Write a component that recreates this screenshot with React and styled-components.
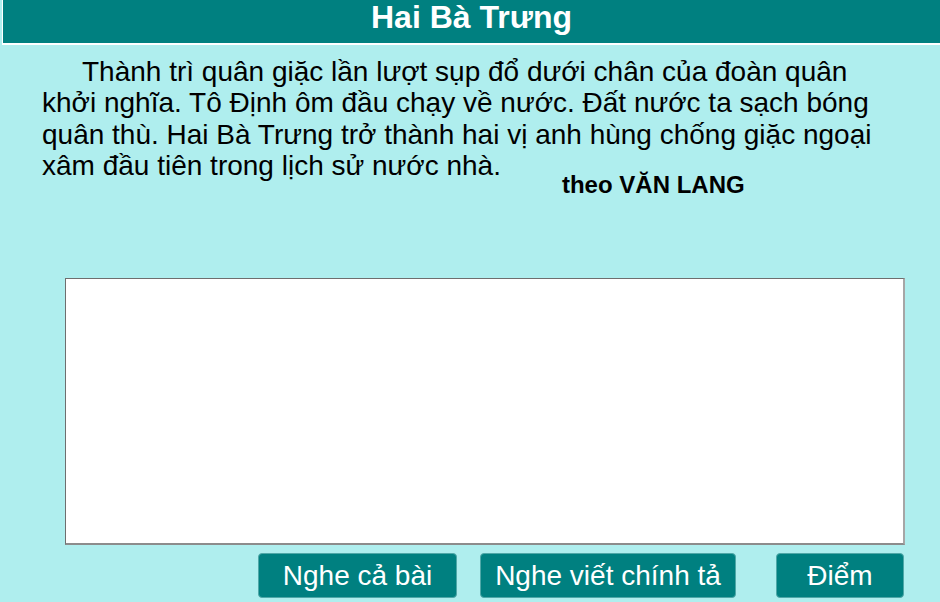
import React from "react"
import styled, { createGlobalStyle } from "styled-components"

const GlobalStyle = createGlobalStyle`
  html, body {
    margin: 0;
    padding: 0;
    background: #afeeee;
  }
  body {
    font-family: "Liberation Sans", Arial, sans-serif;
  }
`

const Page = styled.div`
  width: 940px;
  height: 602px;
  overflow: hidden;
  background: #afeeee;
  color: #000;
`

const Header = styled.h1`
  margin: 0 0 0 2px;
  height: 43px;
  line-height: 34px;
  background: #008080;
  border-left: 1px solid #fff;
  border-bottom: 2px solid #fff;
  color: #fff;
  font-size: 32px;
  font-weight: bold;
  text-align: center;
`

const Story = styled.p`
  margin: 11px 0 0;
  padding: 0 42px;
  font-size: 28px;
  line-height: 31.3px;
  text-indent: 40px;
`

const Credit = styled.span`
  margin-left: 61px;
  font-size: 24px;
  font-weight: bold;
  vertical-align: -18px;
`

const Answer = styled.textarea`
  display: block;
  box-sizing: border-box;
  width: 840px;
  height: 267px;
  margin: 78px 0 0 65px;
  padding: 4px;
  background: #fff;
  border-style: solid;
  border-width: 1px 2px 2px 1px;
  border-color: #6e6e6e #a6a6a6 #8c8c8c #6e6e6e;
  resize: none;
  font-family: "Liberation Sans", Arial, sans-serif;
  font-size: 24px;
  outline: none;
`

const Toolbar = styled.div`
  display: flex;
  justify-content: flex-end;
  margin-top: 8px;
  padding-right: 36px;
`

const Button = styled.button`
  box-sizing: border-box;
  width: ${props => props.$width}px;
  height: 45px;
  margin-left: ${props => props.$gap}px;
  padding: 0;
  background: #008080;
  border: 1px solid #4fa8a8;
  border-radius: 4px;
  color: #fff;
  font-family: "Liberation Sans", Arial, sans-serif;
  font-size: 28px;
  cursor: pointer;
`

export default function App() {
  return (
    <Page>
      <GlobalStyle />
      <Header>Hai Bà Trưng</Header>
      <Story>
        Thành trì quân giặc lần lượt sụp đổ dưới chân của đoàn quân khởi nghĩa.
        Tô Định ôm đầu chạy về nước. Đất nước ta sạch bóng quân thù. Hai Bà
        Trưng trở thành hai vị anh hùng chống giặc ngoại xâm đầu tiên trong
        lịch sử nước nhà.
        <Credit>theo VĂN LANG</Credit>
      </Story>
      <Answer />
      <Toolbar>
        <Button $width={199} $gap={0}>Nghe cả bài</Button>
        <Button $width={256} $gap={23}>Nghe viết chính tả</Button>
        <Button $width={128} $gap={40}>Điểm</Button>
      </Toolbar>
    </Page>
  )
}
